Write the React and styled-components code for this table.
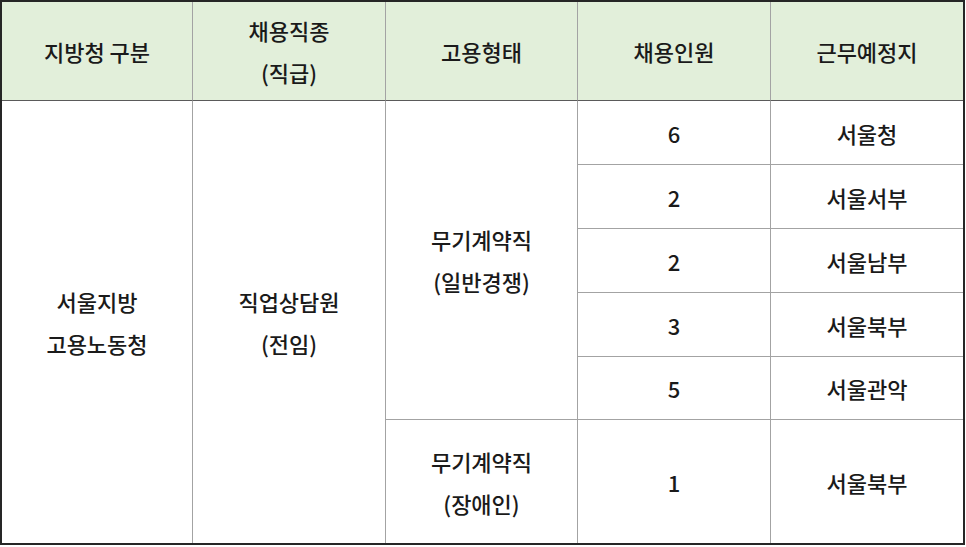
import React from "react";
import styled, { createGlobalStyle } from "styled-components";

const Global = createGlobalStyle`
  html, body { margin: 0; padding: 0; background: #ffffff; }
  body { font-family: "Noto Sans CJK KR", "Noto Sans", sans-serif; }
`;

const Table = styled.div`
  box-sizing: border-box;
  width: 965px;
  height: 545px;
  border: 2px solid #262626;
  display: grid;
  grid-template-columns: 191px 193px 192px 193px 1fr;
  grid-template-rows: 99px 64px 64px 64px 64px 63px 1fr;
  background: #ffffff;
`;

const Cell = styled.div`
  box-sizing: border-box;
  display: flex;
  flex-direction: column;
  align-items: center;
  justify-content: center;
  text-align: center;
  font-size: 22px;
  font-weight: 500;
  line-height: 42px;
  color: #1a1a1a;
  background: ${(p) => (p.$head ? "#e2efda" : "#ffffff")};
  border-right: ${(p) => (p.$lastCol ? "none" : "1px solid #a3a3a3")};
  border-bottom: ${(p) =>
    p.$lastRow ? "none" : p.$head ? "1px solid #5a5a5a" : "1px solid #a3a3a3"};
  grid-row: ${(p) => p.$row || "auto"};
  grid-column: ${(p) => p.$col || "auto"};
  padding-bottom: ${(p) => (p.$head ? "1px" : "0")};
`;

const rows = [
  ["6", "서울청"],
  ["2", "서울서부"],
  ["2", "서울남부"],
  ["3", "서울북부"],
  ["5", "서울관악"],
];

export default function App() {
  return (
    <>
      <Global />
      <Table>
        <Cell $head $row="1" $col="1">지방청 구분</Cell>
        <Cell $head $row="1" $col="2">
          <span>채용직종</span>
          <span>(직급)</span>
        </Cell>
        <Cell $head $row="1" $col="3">고용형태</Cell>
        <Cell $head $row="1" $col="4">채용인원</Cell>
        <Cell $head $lastCol $row="1" $col="5">근무예정지</Cell>

        <Cell $lastRow $row="2 / 8" $col="1">
          <span>서울지방</span>
          <span>고용노동청</span>
        </Cell>
        <Cell $lastRow $row="2 / 8" $col="2">
          <span>직업상담원</span>
          <span>(전임)</span>
        </Cell>
        <Cell $row="2 / 7" $col="3">
          <span>무기계약직</span>
          <span>(일반경쟁)</span>
        </Cell>
        {rows.map(([n, place], i) => (
          <React.Fragment key={i}>
            <Cell $row={`${i + 2}`} $col="4">{n}</Cell>
            <Cell $lastCol $row={`${i + 2}`} $col="5">{place}</Cell>
          </React.Fragment>
        ))}
        <Cell $lastRow $row="7" $col="3">
          <span>무기계약직</span>
          <span>(장애인)</span>
        </Cell>
        <Cell $lastRow $row="7" $col="4">1</Cell>
        <Cell $lastRow $lastCol $row="7" $col="5">서울북부</Cell>
      </Table>
    </>
  );
}
